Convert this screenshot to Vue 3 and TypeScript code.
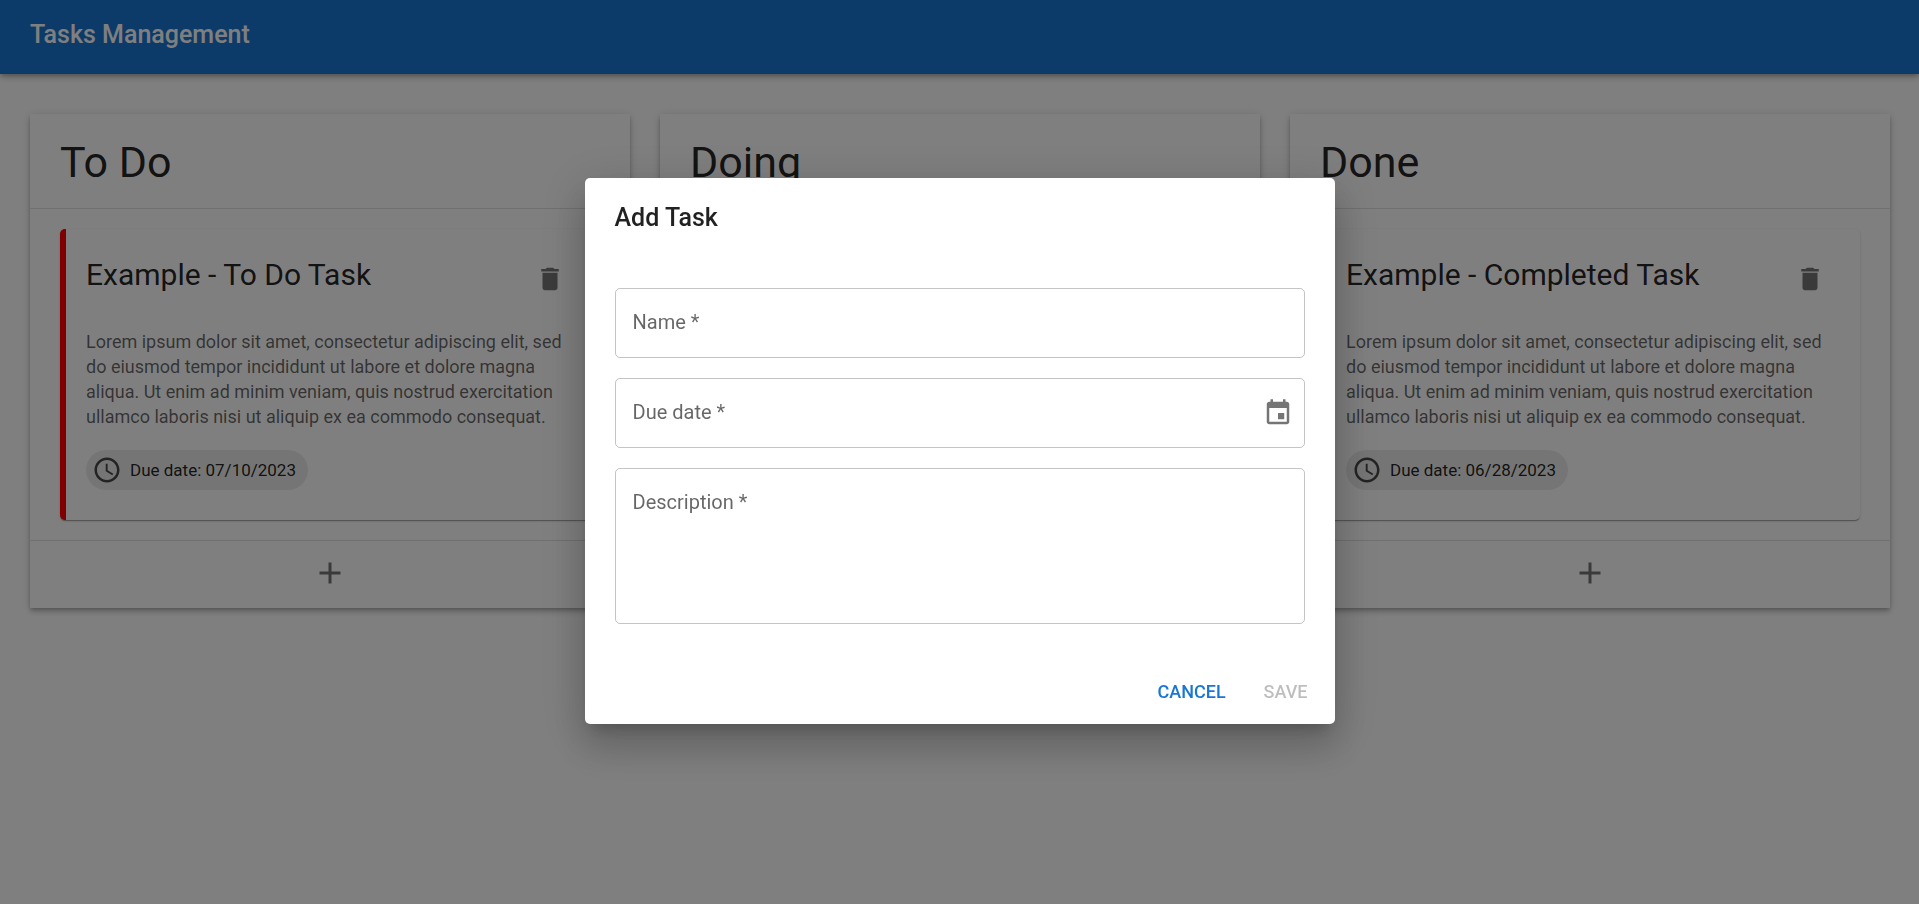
<script setup lang="ts">
import { computed, ref } from 'vue'

interface Task {
  title: string
  text: string
  due: string
  late: boolean
}

interface Column {
  title: string
  tasks: Task[]
}

const lorem =
  'Lorem ipsum dolor sit amet, consectetur adipiscing elit, sed do eiusmod tempor incididunt ut labore et dolore magna aliqua. Ut enim ad minim veniam, quis nostrud exercitation ullamco laboris nisi ut aliquip ex ea commodo consequat.'

const columns = ref<Column[]>([
  { title: 'To Do', tasks: [{ title: 'Example - To Do Task', text: lorem, due: '07/10/2023', late: true }] },
  { title: 'Doing', tasks: [] },
  { title: 'Done', tasks: [{ title: 'Example - Completed Task', text: lorem, due: '06/28/2023', late: false }] },
])

const open = ref(true)
const target = ref(0)
const name = ref('')
const due = ref('')
const description = ref('')
const complete = computed(() => Boolean(name.value && due.value && description.value))

function startTask(index: number) {
  target.value = index
  open.value = true
}

function removeTask(column: Column, index: number) {
  column.tasks.splice(index, 1)
}

function save() {
  columns.value[target.value].tasks.push({
    title: name.value,
    text: description.value,
    due: due.value,
    late: false,
  })
  name.value = ''
  due.value = ''
  description.value = ''
  open.value = false
}
</script>

<template>
  <div class="page">
    <header class="bar">
      <h1 class="bar-title">Tasks Management</h1>
    </header>

    <main class="board">
      <section v-for="(column, c) in columns" :key="column.title" class="column">
        <h2 class="column-title">{{ column.title }}</h2>
        <div class="tasks">
          <article
            v-for="(task, t) in column.tasks"
            :key="task.title"
            class="task"
            :class="{ late: task.late }"
          >
            <div class="task-head">
              <h3 class="task-title">{{ task.title }}</h3>
              <button class="icon-button" type="button" aria-label="Delete task" @click="removeTask(column, t)">
                <svg class="icon" viewBox="0 0 24 24">
                  <path d="M6 19c0 1.1.9 2 2 2h8c1.1 0 2-.9 2-2V7H6v12zM19 4h-3.500l-1-1h-5l-1 1H5v2h14V4z" />
                </svg>
              </button>
            </div>
            <p class="task-text">{{ task.text }}</p>
            <div class="chip">
              <svg class="icon" viewBox="0 0 24 24">
                <path
                  d="M11.990 2C6.470 2 2 6.480 2 12s4.470 10 9.990 10C17.520 22 22 17.520 22 12S17.520 2 11.990 2zM12 20c-4.420 0-8-3.580-8-8s3.580-8 8-8 8 3.580 8 8-3.580 8-8 8z"
                />
                <path d="M12.500 7H11v6l5.250 3.150.75-1.230-4.500-2.670z" />
              </svg>
              <span>Due date: {{ task.due }}</span>
            </div>
          </article>
        </div>
        <div class="column-foot">
          <button class="icon-button" type="button" aria-label="Add task" @click="startTask(c)">
            <svg class="icon plus" viewBox="0 0 24 24">
              <path d="M19 13h-6v6h-2v-6H5v-2h6V5h2v6h6v2z" />
            </svg>
          </button>
        </div>
      </section>
    </main>

    <div v-if="open" class="backdrop">
      <form class="dialog" role="dialog" aria-modal="true" aria-labelledby="dialog-title" @submit.prevent="save">
        <h2 id="dialog-title" class="dialog-title">Add Task</h2>
        <div class="fields">
          <div class="field">
            <label for="task-name" :class="{ filled: name }">Name *</label>
            <input id="task-name" v-model="name" type="text" />
          </div>
          <div class="field">
            <label for="task-due" :class="{ filled: due }">Due date *</label>
            <input id="task-due" v-model="due" type="text" />
            <button class="icon-button calendar" type="button" aria-label="Choose date">
              <svg class="icon" viewBox="0 0 24 24">
                <path
                  d="M17 12h-5v5h5v-5zM16 1v2H8V1H6v2H5c-1.110 0-1.990.9-1.990 2L3 19c0 1.100.89 2 2 2h14c1.100 0 2-.9 2-2V5c0-1.100-.9-2-2-2h-1V1h-2zm3 18H5V8h14v11z"
                />
              </svg>
            </button>
          </div>
          <div class="field">
            <label for="task-description" :class="{ filled: description }">Description *</label>
            <textarea id="task-description" v-model="description" rows="4"></textarea>
          </div>
        </div>
        <div class="actions">
          <button class="action" type="button" @click="open = false">Cancel</button>
          <button class="action" type="submit" :disabled="!complete">Save</button>
        </div>
      </form>
    </div>
  </div>
</template>

<style>
body {
  margin: 0;
  background: #fff;
}
</style>

<style scoped>
.page {
  min-height: 100vh;
  font-family: Roboto, 'Liberation Sans', sans-serif;
  color: rgba(0, 0, 0, 0.87);
}

h1,
h2,
h3,
p {
  margin: 0;
}

.bar {
  display: flex;
  box-sizing: border-box;
  height: 74px;
  padding: 16px 30px;
  background: #1976d2;
  color: #fff;
  box-shadow:
    0 2px 4px -1px rgba(0, 0, 0, 0.2),
    0 4px 5px 0 rgba(0, 0, 0, 0.14),
    0 1px 10px 0 rgba(0, 0, 0, 0.12);
}

.bar-title {
  font-size: 25px;
  font-weight: 500;
  line-height: 38px;
}

.board {
  display: grid;
  grid-template-columns: repeat(3, minmax(0, 1fr));
  gap: 30px;
  padding: 40px 29px 40px 30px;
}

.column {
  display: flex;
  flex-direction: column;
  background: #fff;
  box-shadow:
    0 2px 4px -1px rgba(0, 0, 0, 0.2),
    0 4px 5px 0 rgba(0, 0, 0, 0.14),
    0 1px 10px 0 rgba(0, 0, 0, 0.12);
}

.column-title {
  padding: 20px 30px 18px;
  border-bottom: 1px solid rgba(0, 0, 0, 0.12);
  font-size: 43px;
  font-weight: 400;
  line-height: 56px;
}

.tasks {
  display: flex;
  flex: 1;
  flex-direction: column;
  gap: 20px;
  padding: 20px 30px;
}

.task {
  padding: 20px;
  border-left: 6px solid transparent;
  border-radius: 5px;
  background: #fff;
  box-shadow:
    0 2px 1px -1px rgba(0, 0, 0, 0.2),
    0 1px 1px 0 rgba(0, 0, 0, 0.14),
    0 1px 3px 0 rgba(0, 0, 0, 0.12);
}

.late {
  border-left-color: #f00;
}

.task-head {
  display: flex;
  align-items: flex-start;
  justify-content: space-between;
  height: 80px;
}

.task-title {
  padding-top: 6px;
  font-size: 30px;
  font-weight: 400;
  line-height: 40px;
}

.icon-button {
  display: flex;
  padding: 10px;
  border: 0;
  border-radius: 50%;
  background: none;
  color: rgba(0, 0, 0, 0.54);
  cursor: pointer;
}

.task-head .icon-button {
  padding: 15px;
}

.icon {
  display: block;
  width: 30px;
  height: 30px;
  fill: currentColor;
}

.plus {
  width: 36px;
  height: 36px;
}

.task-text {
  color: rgba(0, 0, 0, 0.6);
  font-size: 18px;
  line-height: 25px;
}

.chip {
  display: flex;
  align-items: center;
  gap: 8px;
  width: fit-content;
  height: 40px;
  margin: 21px 0 10px;
  padding: 0 12px 0 6px;
  border-radius: 20px;
  background: rgba(0, 0, 0, 0.08);
  font-size: 17px;
}

.chip .icon {
  color: rgba(0, 0, 0, 0.7);
}

.column-foot {
  display: flex;
  align-items: flex-start;
  justify-content: center;
  box-sizing: border-box;
  height: 68px;
  padding-top: 4px;
  border-top: 1px solid rgba(0, 0, 0, 0.12);
}

.backdrop {
  position: fixed;
  inset: 0;
  display: flex;
  align-items: center;
  justify-content: center;
  padding-bottom: 2px;
  background: rgba(0, 0, 0, 0.5);
}

.dialog {
  box-sizing: border-box;
  width: 100%;
  max-width: 750px;
  border-radius: 5px;
  background: #fff;
  box-shadow:
    0 11px 15px -7px rgba(0, 0, 0, 0.2),
    0 24px 38px 3px rgba(0, 0, 0, 0.14),
    0 9px 46px 8px rgba(0, 0, 0, 0.12);
}

.dialog-title {
  padding: 20px 30px;
  font-size: 25px;
  font-weight: 500;
  line-height: 40px;
}

.fields {
  display: flex;
  flex-direction: column;
  gap: 20px;
  padding: 30px;
}

.field {
  display: grid;
  grid-template-columns: 1fr auto;
  align-items: center;
  border: 1px solid rgba(0, 0, 0, 0.23);
  border-radius: 5px;
}

.field label {
  z-index: 1;
  grid-area: 1 / 1;
  align-self: start;
  padding: 18px 17px;
  color: rgba(0, 0, 0, 0.6);
  font-size: 20px;
  line-height: 30px;
  pointer-events: none;
}

.field label.filled {
  visibility: hidden;
}

.field input,
.field textarea {
  box-sizing: border-box;
  grid-area: 1 / 1;
  width: 100%;
  padding: 18px 17px;
  border: 0;
  outline: 0;
  background: none;
  color: inherit;
  font-family: inherit;
  font-size: 20px;
  line-height: 30px;
  resize: none;
}

.field input {
  height: 68px;
}

.field textarea {
  display: block;
  height: 154px;
}

.calendar {
  margin-right: 1px;
}

.actions {
  display: flex;
  justify-content: flex-end;
  gap: 10px;
  padding: 15px 13px 9px;
}

.action {
  padding: 8px 14px;
  border: 0;
  border-radius: 5px;
  background: none;
  color: #1976d2;
  font-family: inherit;
  font-size: 18px;
  font-weight: 500;
  line-height: 30px;
  text-transform: uppercase;
  cursor: pointer;
}

.action:disabled {
  color: rgba(0, 0, 0, 0.26);
  cursor: default;
}
</style>
